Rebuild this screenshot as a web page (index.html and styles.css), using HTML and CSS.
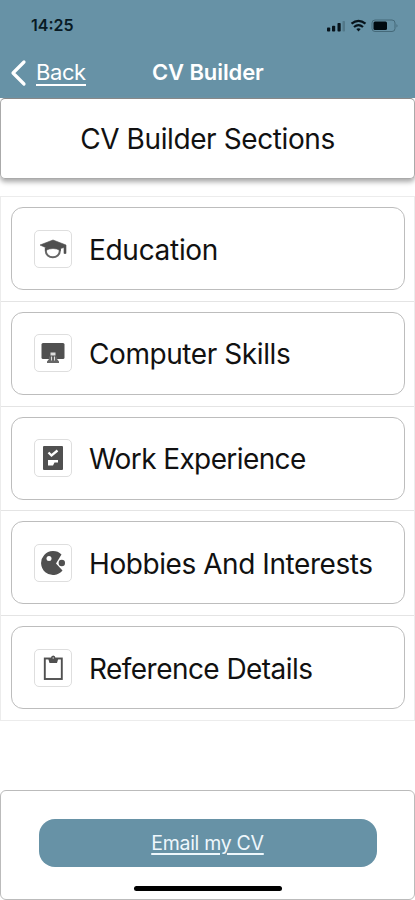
FILE: index.html
```html
<!DOCTYPE html>
<html lang="en">
<head>
<meta charset="utf-8">
<meta name="viewport" content="width=device-width, initial-scale=1">
<title>CV Builder</title>
<link rel="stylesheet" href="styles.css">
</head>
<body>
<div class="screen">
  <header class="top">
    <div class="status">
      <span class="time">14:25</span>
      <svg class="indicators" width="72" height="16" viewBox="0 0 72 16">
        <g fill="#07131b"><rect x="0" y="10.500" width="3.200" height="4" rx=".8"/><rect x="5" y="8.800" width="3.200" height="5.700" rx=".8"/><rect x="10.500" y="6" width="3.200" height="8.500" rx=".8"/></g>
        <rect x="15.500" y="4" width="2.500" height="10.500" rx=".8" fill="#527889"/>
        <g fill="none" stroke="#07131b" stroke-width="2.200"><path d="M24.500 6.700Q31.500 .9 38.500 6.700"/><path d="M27 10Q31.500 6.200 36 10"/></g>
        <path d="M29.300 12Q31.500 10.500 33.700 12L31.500 14.400Z" fill="#07131b"/>
        <rect x="45" y="3" width="23" height="11.500" rx="3" fill="none" stroke="#456979"/>
        <rect x="46.500" y="4.500" width="13.500" height="8.500" rx="1.500" fill="#000a10"/>
        <path d="M69.500 7q2 1.800 0 3.600z" fill="#456979"/>
      </svg>
    </div>
    <nav class="nav">
      <a class="back"><svg width="17" height="28" viewBox="0 0 17 28"><path d="M14 3L3 14L14 25" fill="none" stroke="#fff" stroke-width="3.200" stroke-linecap="round" stroke-linejoin="round"/></svg><span>Back</span></a>
      <h1>CV Builder</h1>
    </nav>
  </header>
  <section class="heading"><h2>CV Builder Sections</h2></section>
  <main class="list">
    <div class="row"><div class="card"><span class="tile"><svg width="28" height="28" viewBox="0 0 28 28"><path d="M6.800 13V16A7 6.200 0 0 0 20.800 16V13" fill="none" stroke="#666" stroke-width="2"/><path d="M1 10L14 5L27 10V18.500H25V12.500L21.500 13.500V15.500Q14 11.500 6.500 15.500V12.500Z" fill="#505050" stroke="#505050" stroke-width=".6" stroke-linejoin="round"/></svg></span><span class="label education">Education</span></div></div>
    <div class="row"><div class="card"><span class="tile"><svg width="28" height="28" viewBox="0 0 28 28"><rect x="2.500" y="4" width="23" height="16" rx="1.500" fill="#505050"/><rect x="11.500" y="13.500" width="5" height="3" fill="#ddd"/><path d="M10 17.500H18V20L20 22.500V24H8V22.500L10 20Z" fill="#666"/><path d="M12.500 17.500V21.500M15.500 17.500V21.500" stroke="#ddd"/></svg></span><span class="label computer">Computer Skills</span></div></div>
    <div class="row"><div class="card"><span class="tile"><svg width="28" height="28" viewBox="0 0 28 28"><rect x="4" y="2" width="20" height="24" rx="1" fill="#505050"/><path d="M9.500 8.500L12.500 11.500L18.500 6.500" fill="none" stroke="#fff" stroke-width="2.300"/><path d="M9 16H19V18.500H15.500L14 21.500H9Z" fill="#fff"/></svg></span><span class="label work">Work Experience</span></div></div>
    <div class="row"><div class="card"><span class="tile"><svg width="28" height="28" viewBox="0 0 28 28"><path d="M22.500 5.500A12 12 0 1 0 23.500 21.500L17 14.500Z" fill="#505050"/><circle cx="10" cy="9.500" r="2.500" fill="#fff"/><circle cx="22.800" cy="14" r="3.200" fill="#505050"/></svg></span><span class="label hobbies">Hobbies And Interests</span></div></div>
    <div class="row"><div class="card"><span class="tile"><svg width="28" height="28" viewBox="0 0 28 28"><rect x="5.800" y="4.500" width="17" height="20.500" fill="none" stroke="#505050" stroke-width="1.900"/><path d="M9 4H12Q12 1.500 14.200 1.500Q16.400 1.500 16.400 4H19.500L18 9H10.500Z" fill="#505050"/><circle cx="14.200" cy="4" r=".7" fill="#ddd"/></svg></span><span class="label reference">Reference Details</span></div></div>
  </main>
  <footer class="actions">
    <button class="email"><span>Email my CV</span></button>
    <div class="home"></div>
  </footer>
</div>
</body>
</html>
```
FILE: styles.css
```css
* { box-sizing: border-box; }
body { margin: 0; background: #fff; font-family: Inter, "Liberation Sans", sans-serif; color: #111; }
h1, h2 { margin: 0; }
.screen { height: 900px; display: flex; flex-direction: column; overflow: hidden; }
.top { height: 98px; flex: none; background: #6792a6; }
.status { height: 49px; display: flex; justify-content: space-between; padding: 17px 16px 0 31px; }
.time { font-size: 16px; line-height: 17px; font-weight: 600; color: #081a24; letter-spacing: 0; }
.nav { height: 48px; display: grid; grid-template-columns: 152px 1fr; align-items: center; color: #fff; }
.back { display: flex; align-items: center; gap: 9px; padding-left: 10px; font-size: 22px; letter-spacing: -.4px; }
.back span { line-height: 24px; border-bottom: 2px solid #fff; }
.nav h1 { font-size: 22px; line-height: 24px; font-weight: 600; letter-spacing: -.1px; padding-bottom: 2px; }
.heading { height: 81px; flex: none; display: flex; justify-content: center; align-items: center; border: 1px solid #aaa; border-top-color: #888; border-radius: 5px; background: linear-gradient(#fff, #fff) padding-box; box-shadow: 0 3px 5px #aaa; }
.heading h2 { font-size: 28px; font-weight: 400; letter-spacing: -.4px; }
.list { flex: none; margin-top: 17px; height: 525px; display: flex; flex-direction: column; border: 1px solid #ececec; }
.row { flex: 1; padding: 10px 9.500px 0 10px; }
.row + .row { border-top: 1.500px solid #e4e4e4; }
.card { height: 83px; display: flex; align-items: center; gap: 17px; padding-left: 22px; border: 1px solid #bdbdbd; border-radius: 12px; }
.tile { width: 38px; height: 38px; display: grid; place-items: center; border: 1px solid #dedede; border-radius: 5px; }
.label { font-size: 28px; padding-top: 2px; white-space: nowrap; }
.education { letter-spacing: -.3px; }
.computer { letter-spacing: -.42px; }
.work { letter-spacing: -.6px; }
.hobbies { letter-spacing: -.43px; }
.reference { letter-spacing: -.55px; }
.actions { height: 110px; flex: none; margin-top: auto; border: 1px solid #bbb; border-radius: 6px; padding-top: 28px; display: flex; flex-direction: column; align-items: center; }
.email { width: 338px; height: 48px; border: 0; border-radius: 16px; background: #6792a6; color: #eef7fc; font-family: inherit; font-size: 19.500px; letter-spacing: -.28px; }
.email span { text-decoration: underline; text-decoration-thickness: 2px; text-underline-offset: 3px; }
.home { width: 148px; height: 5px; margin-top: 19px; background: #000; border-radius: 3px; }
```
